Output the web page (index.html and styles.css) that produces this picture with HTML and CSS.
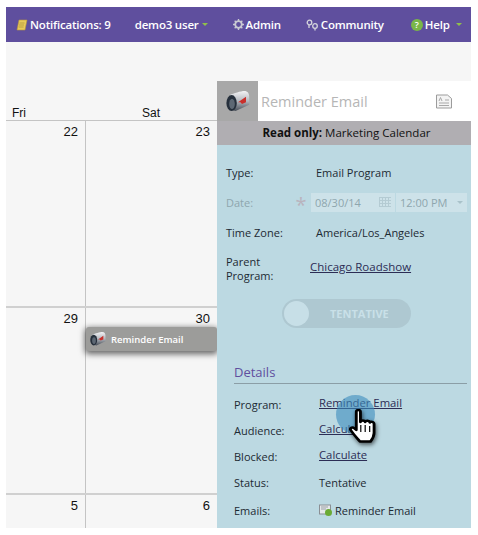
FILE: index.html
```html
<!DOCTYPE html>
<html lang="en">
<head>
    <meta charset="UTF-8">
    <meta name="viewport" content="width=device-width, initial-scale=1.0">
    <title>Reminder Email</title>
    <link rel="stylesheet" href="styles.css">
</head>
<body>
    <div class="frame">
        <div class="topbar">
            <span class="nav-item nav-notes">
                <svg width="12" height="12" viewBox="0 0 12 12"><path d="M3 1h8L9 11H1z" fill="#e9c95a" stroke="#b8953a" stroke-width=".6"/><path d="M3.500 4h5M3 6h5M2.600 8h5" stroke="#a98c3c" stroke-width=".7"/></svg>
                Notifications: 9
            </span>
            <span class="nav-item nav-user">demo3 user <i class="caret"></i></span>
            <span class="nav-item nav-admin">
                <svg width="11" height="11" viewBox="0 0 12 12"><circle cx="6" cy="6" r="3.600" fill="none" stroke="#c9c9d2" stroke-width="2"/><path d="M6 0v3M6 9v3M0 6h3M9 6h3M1.800 1.800l2 2M8.200 8.200l2 2M10.200 1.800l-2 2M3.800 8.200l-2 2" stroke="#c9c9d2" stroke-width="1.500"/></svg>
                Admin
            </span>
            <span class="nav-item nav-community">
                <svg width="13" height="12" viewBox="0 0 13 12"><circle cx="3.500" cy="3.500" r="2.300" fill="none" stroke="#d5d5dc" stroke-width="1.300"/><circle cx="9" cy="7" r="2.300" fill="none" stroke="#d5d5dc" stroke-width="1.300"/><path d="M3 6v3M9 9.500v2" stroke="#d5d5dc" stroke-width="1.300"/></svg>
                Community
            </span>
            <span class="nav-item nav-help">
                <span class="help-dot">?</span>
                Help
            </span>
            <i class="caret caret-help"></i>
        </div>

        <div class="main">
            <div class="calendar">
                <div class="day-heads">
                    <div class="day-head day-narrow">Fri</div>
                    <div class="day-head day-wide">Sat</div>
                </div>
                <div class="week week-tall">
                    <div class="cell cell-narrow">22</div>
                    <div class="cell">23</div>
                </div>
                <div class="week week-tall">
                    <div class="cell cell-narrow">29</div>
                    <div class="cell">30</div>
                    <div class="event">
                        <svg class="mailbox-sm" width="16" height="14" viewBox="0 0 30 26"><use href="#mailbox"/></svg>
                        Reminder Email
                    </div>
                </div>
                <div class="week">
                    <div class="cell cell-narrow">5</div>
                    <div class="cell">6</div>
                </div>
            </div>

            <div class="panel">
                <div class="panel-head">
                    <div class="panel-icon">
                        <svg width="24" height="21" viewBox="0 0 30 26">
                            <defs>
                                <linearGradient id="boxFill" x1="0" y1="0" x2="0" y2="1">
                                    <stop offset="0" stop-color="#f2f2f4"/>
                                    <stop offset=".5" stop-color="#b4b8bf"/>
                                    <stop offset="1" stop-color="#474e58"/>
                                </linearGradient>
                                <g id="mailbox">
                                    <path d="M5 5C9 3 19 0 23 0c4 0 6 3 6 7v10L12 25C8 25 5 20 5 14z" fill="url(#boxFill)"/>
                                    <ellipse cx="7" cy="15" rx="6.500" ry="10" fill="#26303c"/>
                                    <ellipse cx="7.500" cy="16" rx="3.500" ry="6.500" fill="#5d6874"/>
                                    <path d="M15 14l10-7v7l-5 2-2-2z" fill="#c9302c"/>
                                </g>
                            </defs>
                            <use href="#mailbox"/>
                        </svg>
                    </div>
                    <div class="panel-title">Reminder Email</div>
                    <svg class="note-icon" width="18" height="15" viewBox="0 0 18 15"><path d="M1.500 1h11l4 3.500V14h-15z" fill="#f4f4f4" stroke="#9c9c9c"/><path d="M4 9h10M4 11.500h10M10 6h4" stroke="#a8a8a8"/><path d="M4 7l1.500-3.500L7 7" fill="none" stroke="#a8a8a8"/></svg>
                </div>
                <div class="readonly"><b>Read only:</b> Marketing Calendar</div>

                <div class="panel-body">
                    <div class="row row-type">
                        <span class="label">Type:</span>
                        <span>Email Program</span>
                    </div>
                    <div class="row row-date">
                        <span class="label label-off">Date:</span>
                        <span class="star">*</span>
                        <span class="date-box">
                            08/30/14
                            <svg width="12" height="10" viewBox="0 0 12 10"><path d="M0 .5h12M0 3.500h12M0 6.500h12M0 9.500h12M.5 0v10M3.500 0v10M6.500 0v10M9.500 0v10" stroke="#b4cbd3"/></svg>
                        </span>
                        <span class="time-box">12:00 PM <i class="caret-off"></i></span>
                    </div>
                    <div class="row row-zone">
                        <span class="label">Time Zone:</span>
                        <span>America/Los_Angeles</span>
                    </div>
                    <div class="row row-parent">
                        <span class="label">Parent<br>Program:</span>
                        <a class="link link-parent">Chicago Roadshow</a>
                    </div>

                    <div class="toggle">
                        <span class="knob"></span>
                        <span class="toggle-text">TENTATIVE</span>
                    </div>

                    <div class="details">
                        <div class="details-title">Details</div>
                        <div class="detail"><span class="label">Program:</span><a class="link">Reminder Email</a></div>
                        <div class="detail"><span class="label">Audience:</span><a class="link">Calculate</a></div>
                        <div class="detail"><span class="label">Blocked:</span><a class="link">Calculate</a></div>
                        <div class="detail"><span class="label">Status:</span><span>Tentative</span></div>
                        <div class="detail detail-last">
                            <span class="label">Emails:</span>
                            <span class="email-val">
                                <svg width="14" height="13" viewBox="0 0 14 13"><rect x=".5" y="1" width="11" height="9" fill="#e6e8ea" stroke="#8a8f94"/><path d="M2 3h7M2 5h5" stroke="#9aa0a5"/><circle cx="9.500" cy="8.500" r="3.500" fill="#6bab35"/></svg>
                                Reminder Email
                            </span>
                        </div>
                    </div>

                    <span class="halo"></span>
                    <svg class="cursor" width="32" height="35" viewBox="0 0 27 35" preserveAspectRatio="none">
                        <path d="M7 2.500c0-2 3.500-2 3.500 0V13c.5-2 3.500-2 4 0 .5-1.800 3.500-1.800 4 .5.500-1.300 3.500-1 3.500 1.500V24c0 4-2 7-3 8.500H10C8.500 30 6 27.500 2.500 21.500c-1.500-2.500 1-4 3-2L7 21z" fill="#fff" stroke="#000" stroke-width="2.400" stroke-linejoin="round"/>
                        <path d="M10.800 16v7M14.500 16v7M18.300 17v6" stroke="#000" stroke-width="1"/>
                    </svg>
                </div>
            </div>
        </div>
    </div>
</body>
</html>
```

FILE: styles.css
```css
html, body {
    margin: 0;
    height: 100%;
    background-color: #fff;
}
body {
    padding: 7px 7px 7px 6px;
    box-sizing: border-box;
    height: 535px;
    overflow: hidden;
    font-family: "Open Sans", Arial, sans-serif;
    font-size: 11px;
    color: #1c2a33;
}
.frame {
    height: 521px;
    display: flex;
    flex-direction: column;
    background-color: #f6f6f6;
    overflow: hidden;
}

/* top bar */
.topbar {
    height: 35px;
    flex: none;
    display: flex;
    align-items: center;
    background-color: #5f4f9e;
    color: #fff;
    font-size: 11.500px;
    font-weight: 600;
    letter-spacing: -0.2px;
}
.nav-item {
    display: flex;
    align-items: center;
    gap: 2px;
    white-space: nowrap;
}
.nav-notes { margin-left: 10px; }
.nav-user { margin-left: 24px; gap: 3px; }
.nav-admin { margin-left: 25px; }
.nav-community { margin-left: 25px; }
.nav-help { margin-left: 27px; }
.help-dot {
    width: 12px;
    height: 12px;
    border-radius: 50%;
    background-color: #7ab648;
    font-size: 9px;
    line-height: 12px;
    text-align: center;
}
.caret {
    width: 0;
    height: 0;
    border-left: 3px solid transparent;
    border-right: 3px solid transparent;
    border-top: 3px solid #8fc04a;
}
.caret-help { margin-left: 6px; }

/* calendar */
.main {
    flex: 1;
    display: flex;
    min-height: 0;
}
.calendar {
    width: 211px;
    flex: none;
    padding-top: 61px;
    color: #111;
    font-family: "Liberation Sans", Arial, sans-serif;
}
.day-heads {
    display: flex;
    height: 17px;
    font-size: 12px;
    line-height: 21px;
    border-bottom: 1px solid #c4c4c4;
}
.day-narrow { flex: none; width: 73px; padding-left: 6px; box-sizing: border-box; }
.day-wide { flex: 1; padding-left: 63px; }
.week {
    position: relative;
    display: flex;
    height: 40px;
    font-size: 13px;
}
.week-tall {
    height: 185px;
    border-bottom: 2px solid #d0d0d0;
}
.cell {
    flex: 1;
    padding: 3px 7px 0 0;
    text-align: right;
}
.cell-narrow {
    flex: none;
    width: 72px;
    border-right: 1px solid #c4c4c4;
}
.event {
    position: absolute;
    left: 80px;
    top: 19px;
    width: 131px;
    height: 24px;
    display: flex;
    align-items: center;
    gap: 5px;
    padding-left: 4px;
    box-sizing: border-box;
    background-color: #9c9c9a;
    border-radius: 3px;
    box-shadow: 0 2px 6px 1px rgba(0, 0, 0, 0.6);
    color: #fff;
    font-family: "Open Sans", Arial, sans-serif;
    font-size: 9.500px;
    font-weight: 600;
}

/* side panel */
.panel {
    flex: 1;
    padding-top: 39px;
    display: flex;
    flex-direction: column;
    min-width: 0;
}
.panel-head {
    height: 40px;
    flex: none;
    display: flex;
    align-items: center;
    background-color: #fff;
}
.panel-icon {
    width: 41px;
    height: 40px;
    flex: none;
    display: flex;
    align-items: center;
    justify-content: center;
    background-color: #a8a8a8;
}
.panel-title {
    flex: 1;
    padding-left: 3px;
    font-size: 14.500px;
    color: #b6b6b6;
}
.note-icon { margin-right: 18px; }
.readonly {
    height: 24px;
    flex: none;
    padding-left: 5px;
    line-height: 24px;
    text-align: center;
    background-color: #b0aeb2;
    color: #111;
    font-size: 11.500px;
}
.panel-body {
    position: relative;
    flex: 1;
    padding: 17px 4px 0 9px;
    background-color: #bcd9e2;
}
.row {
    display: flex;
    align-items: center;
    height: 20px;
    margin-bottom: 10px;
}
.row .label { width: 90px; flex: none; }
.label-off { color: #8ea6ae; }
.row-date { color: #8ea6ae; }
.row-date .label { width: 65px; }
.star {
    width: 20px;
    font-size: 20px;
    line-height: 20px;
    padding-top: 6px;
    color: #b9b3bd;
    text-align: center;
}
.date-box, .time-box {
    height: 19px;
    display: flex;
    align-items: center;
    background-color: #cde2e9;
    box-sizing: border-box;
    padding: 0 4px;
}
.date-box { width: 84px; margin-right: 1px; justify-content: space-between; }
.time-box { width: 71px; justify-content: space-between; }
.caret-off {
    width: 0;
    height: 0;
    border-left: 3px solid transparent;
    border-right: 3px solid transparent;
    border-top: 3px solid #a9c2ca;
}
.row-parent {
    height: 30px;
    margin-bottom: 0;
    line-height: 14px;
}
.row-parent .label { width: 84px; padding-top: 4px; }
.link {
    color: #2c2d55;
    text-decoration: underline;
}
.link-parent { font-size: 11.500px; }
.detail .link { font-size: 11.300px; }
.toggle {
    width: 129px;
    height: 29px;
    margin: 17px 0 0 56px;
    display: flex;
    align-items: center;
    border-radius: 15px;
    background-color: #aec8d1;
    box-sizing: border-box;
    padding-left: 2px;
}
.knob {
    width: 25px;
    height: 25px;
    border-radius: 50%;
    background-color: #c7dfe7;
}
.toggle-text {
    margin-left: 21px;
    color: #c9e0e8;
    font-size: 11px;
    font-weight: 700;
}
.details {
    margin: 35px 0 0 8px;
}
.details-title {
    height: 20px;
    line-height: 18px;
    font-size: 13px;
    color: #5f4f9e;
    border-bottom: 1px solid #8b9ea6;
    margin-bottom: 7px;
}
.detail {
    display: flex;
    align-items: center;
    height: 26px;
}
.detail-last { margin-top: 2px; }
.detail .label { width: 85px; flex: none; }
.detail .link { margin-top: -4px; }
.email-val {
    display: flex;
    align-items: center;
    gap: 2px;
}
.halo {
    position: absolute;
    left: 119px;
    top: 250px;
    width: 39px;
    height: 39px;
    border-radius: 50%;
    background-color: rgba(60, 140, 190, 0.6);
}
.cursor {
    position: absolute;
    left: 131px;
    top: 264px;
    filter: drop-shadow(1px 2px 2px rgba(0, 0, 0, 0.6));
}
```
